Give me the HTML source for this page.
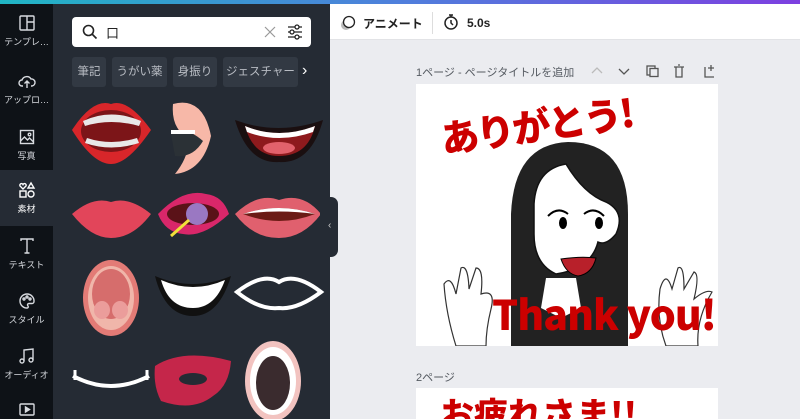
<!DOCTYPE html>
<html><head><meta charset="utf-8"><style>
*{margin:0;padding:0;box-sizing:border-box}
html,body{width:800px;height:419px;overflow:hidden}
body{background:#ebecf0;font-family:"Liberation Sans","Noto Sans CJK JP",sans-serif;position:relative}
.grad{position:absolute;left:0;top:0;width:800px;height:4px;background:linear-gradient(90deg,#20b5c4,#4f7fdc 50%,#7d3fe0)}
.rail{position:absolute;left:0;top:4px;width:53px;height:415px;background:#0e1217}
.panel{position:absolute;left:53px;top:4px;width:277px;height:415px;background:#252b34}
.ri{position:absolute;left:0;width:53px;text-align:center;color:#d8dbe0;font-size:9px}
.ri svg{display:block;margin:0 auto 3px}
.search{position:absolute;left:72px;top:17px;width:239px;height:30px;background:#fff;border-radius:4px}
.chip{position:absolute;top:57px;height:30px;background:#323943;color:#b8bcc3;font-size:11.5px;line-height:30px;text-align:center;border-radius:3px;overflow:hidden;white-space:nowrap}
.hdr{position:absolute;left:330px;top:4px;width:470px;height:36px;background:#fff;border-bottom:1px solid #e2e3e6}
.page{position:absolute;left:416px;width:302px;background:#fff}
.lbl{position:absolute;font-size:11px;color:#555a61}
</style></head><body>
<div class="grad"></div>
<div class="rail">
 <div class="ri" style="top:10px"><svg width="18" height="18" viewBox="0 0 18 18" fill="none" stroke="#d8dbe0" stroke-width="1.4"><rect x="2" y="2" width="14" height="14" rx="1"/><path d="M9 2v14M9 8h7"/></svg>テンプレ…</div>
 <div class="ri" style="top:68px"><svg width="18" height="18" viewBox="0 0 18 18" fill="none" stroke="#d8dbe0" stroke-width="1.4"><path d="M5 14H4a3 3 0 010-6 5 5 0 019-1 3.5 3.5 0 011 7h-1M9 16V9M6.5 11.5L9 9l2.5 2.5"/></svg>アップロ…</div>
 <div class="ri" style="top:124px"><svg width="18" height="18" viewBox="0 0 18 18" fill="none" stroke="#d8dbe0" stroke-width="1.4"><rect x="2.5" y="2.5" width="13" height="13"/><path d="M2.5 13l4-4 3 3 2-2 4 4"/><circle cx="11.5" cy="6.5" r="1.3"/></svg>写真</div>
</div>
<div style="position:absolute;left:0;top:170px;width:53px;height:56px;background:#252b34"></div>
<div class="ri" style="top:181px;color:#fff"><svg width="18" height="18" viewBox="0 0 18 18" fill="none" stroke="#fff" stroke-width="1.4"><path d="M5 8L2 5a1.6 1.6 0 013-1.5A1.6 1.6 0 018 5z"/><path d="M13 2l3 5h-6z"/><rect x="2" y="10" width="6" height="6"/><circle cx="13" cy="13" r="3"/></svg>素材</div>
<div style="position:absolute;left:0;top:226px;width:53px;height:193px;background:#0e1217;border-top-right-radius:6px"></div>
<div class="ri" style="top:237px"><svg width="18" height="18" viewBox="0 0 18 18" fill="none" stroke="#d8dbe0" stroke-width="1.4"><path d="M3 4V2h12v2M9 2v14M6.5 16h5"/></svg>テキスト</div>
<div class="ri" style="top:292px"><svg width="18" height="18" viewBox="0 0 18 18" fill="none" stroke="#d8dbe0" stroke-width="1.4"><path d="M9 2a7 7 0 100 14c1.5 0 1.5-1.5.8-2.3-.8-1 0-2.2 1.2-2.2H14a2 2 0 002-2A7 7 0 009 2z"/><circle cx="6" cy="7" r="1"/><circle cx="9" cy="5" r="1"/><circle cx="12" cy="7" r="1"/></svg>スタイル</div>
<div class="ri" style="top:347px"><svg width="18" height="18" viewBox="0 0 18 18" fill="none" stroke="#d8dbe0" stroke-width="1.4"><path d="M6 14V3l9-1v11"/><circle cx="4" cy="14" r="2"/><circle cx="13" cy="13" r="2"/></svg>オーディオ</div>
<div class="ri" style="top:402px"><svg width="18" height="14" viewBox="0 0 18 14" fill="none" stroke="#d8dbe0" stroke-width="1.4"><rect x="2" y="2" width="14" height="11" rx="1"/><path d="M7.5 5v5l4-2.5z" fill="#d8dbe0"/></svg></div>

<div class="panel"></div>
<div class="search">
 <svg style="position:absolute;left:10px;top:7px" width="16" height="16" viewBox="0 0 16 16" fill="none" stroke="#222" stroke-width="1.6"><circle cx="6.5" cy="6.5" r="5"/><path d="M10 10l4.5 4.5"/></svg>
 <span style="position:absolute;left:34px;top:6px;font-size:13px;color:#222">口</span>
 <svg style="position:absolute;left:192px;top:9px" width="12" height="12" viewBox="0 0 12 12" stroke="#999" stroke-width="1.2"><path d="M1 1l10 10M11 1L1 11"/></svg>
 <svg style="position:absolute;left:215px;top:6px" width="16" height="18" viewBox="0 0 16 18" fill="#fff" stroke="#222" stroke-width="1.3"><path d="M1 4h14M1 9h14M1 14h14"/><circle cx="10" cy="4" r="2"/><circle cx="5" cy="9" r="2"/><circle cx="10" cy="14" r="2"/></svg>
</div>
<div class="chip" style="left:72px;width:34px">筆記</div>
<div class="chip" style="left:112px;width:55px">うがい薬</div>
<div class="chip" style="left:173px;width:44px">身振り</div>
<div class="chip" style="left:223px;width:75px">ジェスチャー</div>
<div style="position:absolute;left:302px;top:62px;color:#fff;font-size:16px">›</div>

<svg style="position:absolute;left:53px;top:96px" width="277" height="323" viewBox="0 0 277 323">
 <path d="M19 34Q40 2 58 8Q75 2 98 34Q75 68 58 68Q40 68 19 34z" fill="#d8262a"/>
 <ellipse cx="58" cy="35" rx="30" ry="21" fill="#7c1518"/>
 <path d="M30 25Q58 12 88 25L86 30Q58 22 32 30z" fill="#e8e8e8"/>
 <path d="M32 47Q58 56 86 47L84 42Q58 50 34 42z" fill="#e8e8e8"/>
 <path d="M120 8Q150 0 158 40Q150 75 122 78Q140 55 132 40Q118 30 120 8z" fill="#f7b8a8"/>
 <path d="M118 38Q130 28 150 45Q140 62 122 60z" fill="#2b3136"/>
 <path d="M118 34h24v4h-24z" fill="#fff"/>
 <path d="M182 24Q225 40 270 24Q258 68 226 66Q195 68 182 24z" fill="#1a0f10"/>
 <path d="M192 30Q226 44 262 30Q255 60 226 60Q200 60 192 30z" fill="#8e1a1d"/>
 <path d="M192 30Q226 44 262 30l-2 6Q226 48 194 36z" fill="#fff"/>
 <ellipse cx="226" cy="52" rx="16" ry="6" fill="#e2626c"/>
 <path d="M19 118Q40 100 58 106Q76 100 98 118Q80 142 58 142Q38 142 19 118z" fill="#e2455a"/>
 <path d="M105 118Q130 92 153 98Q170 100 176 118Q150 142 130 138Q112 136 105 118z" fill="#d9276a"/>
 <ellipse cx="140" cy="118" rx="26" ry="11" fill="#5a1218"/>
 <circle cx="144" cy="118" r="11" fill="#9a78c2"/>
 <path d="M118 140l18-16" stroke="#f1e13a" stroke-width="3"/>
 <path d="M182 118Q205 96 226 104Q250 96 268 118Q250 142 226 142Q200 142 182 118z" fill="#e0606e"/>
 <path d="M190 118Q226 106 262 118Q226 132 190 118z" fill="#6b1b15"/>
 <path d="M190 118Q226 106 262 118Q226 113 190 118z" fill="#fff"/>
 <ellipse cx="58" cy="202" rx="28" ry="38" fill="#e37b76"/>
 <ellipse cx="58" cy="202" rx="23" ry="32" fill="#f0b6aa"/>
 <ellipse cx="58" cy="198" rx="19" ry="25" fill="#d66d6c"/>
 <ellipse cx="49" cy="214" rx="8" ry="9" fill="#eb9d9b"/><ellipse cx="67" cy="214" rx="8" ry="9" fill="#eb9d9b"/>
 <path d="M102 180Q140 196 178 180Q166 220 140 220Q112 220 102 180z" fill="#111"/>
 <path d="M108 184Q140 198 172 184Q162 212 140 212Q116 212 108 184z" fill="#fff"/>
 <path d="M184 196Q210 176 226 186Q242 176 268 196Q244 214 226 212Q206 214 184 196z" fill="none" stroke="#fff" stroke-width="4"/>
 <path d="M20 280Q58 300 96 280" fill="none" stroke="#fff" stroke-width="4"/>
 <path d="M22 274v10M94 274v10" stroke="#fff" stroke-width="3"/>
 <path d="M102 270Q130 252 178 265Q176 290 160 300Q140 316 108 305Q100 290 102 270z" fill="#c5264a"/>
 <ellipse cx="140" cy="283" rx="14" ry="6" fill="#252b34"/>
 <ellipse cx="220" cy="285" rx="28" ry="40" fill="#f2c3c0"/>
 <ellipse cx="220" cy="285" rx="23" ry="34" fill="#fff"/>
 <ellipse cx="220" cy="287" rx="17" ry="27" fill="#3a2b2e"/>
</svg>
<div style="position:absolute;left:320px;top:197px;width:18px;height:60px;background:#252b34;border-radius:0 7px 7px 0"></div>
<div style="position:absolute;left:328px;top:220px;color:#ccc;font-size:10px">‹</div>

<div class="hdr">
 <svg style="position:absolute;left:10px;top:11px" width="16" height="16" viewBox="0 0 16 16" fill="none"><circle cx="6" cy="10" r="5" fill="#bbb"/><circle cx="9" cy="7" r="5.5" fill="#fff" stroke="#222" stroke-width="1.3"/></svg>
 <span style="position:absolute;left:33px;top:11px;font-size:12px;font-weight:bold;color:#222">アニメート</span>
 <div style="position:absolute;left:102px;top:8px;width:1px;height:22px;background:#ddd"></div>
 <svg style="position:absolute;left:113px;top:9px" width="16" height="18" viewBox="0 0 16 18" fill="none" stroke="#222" stroke-width="1.5"><circle cx="8" cy="10" r="6"/><path d="M6 2h4M8 2v2M8 7v3l2 2"/></svg>
 <span style="position:absolute;left:137px;top:12px;font-size:12px;font-weight:bold;color:#222">5.0s</span>
</div>

<div class="lbl" style="left:416px;top:64px">1ページ - ページタイトルを追加</div>
<svg style="position:absolute;left:590px;top:64px" width="130" height="14" viewBox="0 0 130 14" fill="none" stroke-width="1.3">
 <path d="M2 9l5-5 5 5" stroke="#bbb"/><path d="M29 5l5 5 5-5" stroke="#555"/>
 <rect x="57" y="2" width="8" height="9" stroke="#555"/><rect x="60" y="4.5" width="8" height="8" fill="#ebecf0" stroke="#555"/>
 <path d="M84 3h10M86 3v10h6V3M88 1h2" stroke="#555"/>
 <path d="M115 3v10h9M121 1v6M118 4h6" stroke="#555"/>
</svg>
<div class="page" style="top:84px;height:262px;overflow:hidden">
 <div style="position:absolute;left:24px;top:12px;font-size:38px;font-weight:900;color:#cc0000;transform:rotate(-8deg);letter-spacing:-2px;white-space:nowrap;font-family:'Noto Sans CJK JP',sans-serif">ありがとう!</div>
 <svg style="position:absolute;left:0;top:0" width="302" height="262" viewBox="0 0 302 262">
  <path d="M95 262V130Q98 60 152 58Q212 58 212 130V262z" fill="#222"/>
  <path d="M118 120Q120 85 150 80Q168 110 190 118Q210 128 200 150Q190 162 182 158Q175 185 140 190Q118 180 118 150z" fill="#fff" stroke="#111" stroke-width="1.5"/>
  <path d="M130 194h30l5 30-20 10-20-10z" fill="#fff"/>
  <ellipse cx="147" cy="139" rx="4" ry="6" fill="#000"/><ellipse cx="183" cy="139" rx="4" ry="6" fill="#000"/>
  <path d="M132 132Q142 122 152 130M168 130Q178 122 188 132" stroke="#000" stroke-width="2" fill="none"/>
  <path d="M145 175Q165 172 180 174Q176 190 162 192Q150 190 145 175z" fill="#b8202a" stroke="#000"/>
  <path d="M40 262Q30 230 28 200Q35 190 40 210L45 184Q52 180 53 205L60 184Q68 184 65 210Q80 205 75 225Q70 245 70 262z" fill="#fff" stroke="#333" stroke-width="1.2"/>
  <path d="M250 262Q240 235 244 205Q250 185 256 205L262 184Q268 180 268 205L278 188Q284 190 278 215Q290 205 296 208Q280 235 282 262z" fill="#fff" stroke="#333" stroke-width="1.2"/>
 </svg>
 <div style="position:absolute;left:76px;top:206px;font-size:41px;font-weight:900;color:#cc0000;white-space:nowrap;letter-spacing:-1px;font-family:'Noto Sans CJK JP',sans-serif;line-height:1.1">Thank you!</div>
</div>
<div class="lbl" style="left:416px;top:369px">2ページ</div>
<div class="page" style="top:388px;height:31px;overflow:hidden">
 <div style="position:absolute;left:24px;top:6px;font-size:34px;font-weight:900;color:#cc0000;white-space:nowrap;font-family:'Noto Sans CJK JP',sans-serif;line-height:1.1">お疲れさま!!</div>
</div>
</body></html>
